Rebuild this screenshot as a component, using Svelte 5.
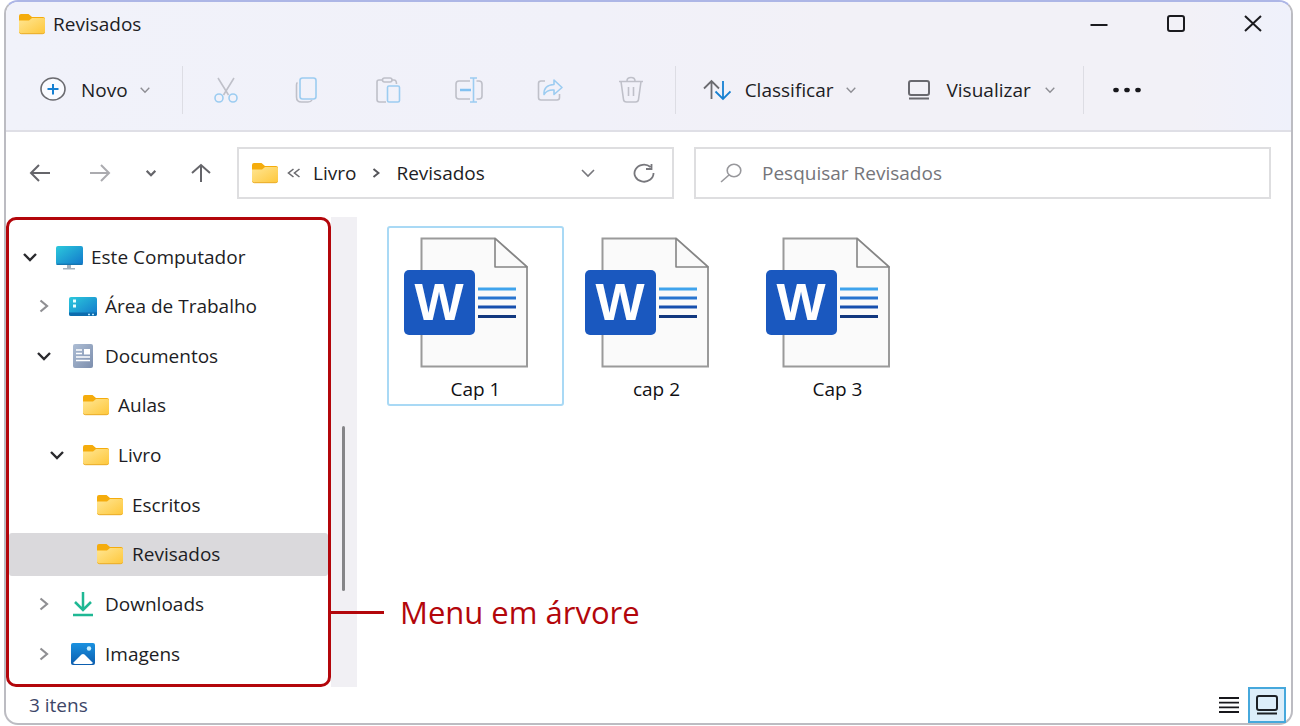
<script>
  const tree = [
    { label: 'Este Computador', level: 0, icon: 'monitor', state: 'open' },
    { label: 'Área de Trabalho', level: 1, icon: 'desktop', state: 'closed' },
    { label: 'Documentos', level: 1, icon: 'document', state: 'open' },
    { label: 'Aulas', level: 2, icon: 'folder' },
    { label: 'Livro', level: 2, icon: 'folder', state: 'open' },
    { label: 'Escritos', level: 3, icon: 'folder' },
    { label: 'Revisados', level: 3, icon: 'folder' },
    { label: 'Downloads', level: 1, icon: 'download', state: 'closed' },
    { label: 'Imagens', level: 1, icon: 'image', state: 'closed' }
  ];
  const files = ['Cap 1', 'cap 2', 'Cap 3'];
  const actions = [
    { id: 'cut', label: 'Recortar' },
    { id: 'copy', label: 'Copiar' },
    { id: 'paste', label: 'Colar' },
    { id: 'rename', label: 'Renomear' },
    { id: 'share', label: 'Compartilhar' },
    { id: 'trash', label: 'Excluir' }
  ];
  let current = $state('Revisados');
  let selected = $state('Cap 1');
  let query = $state('');
</script>

{#snippet folder()}
  <svg width="28" height="24" viewBox="0 0 28 24" aria-hidden="true">
    <path d="M1 4a2 2 0 0 1 2-2h7.500l3.500 3h11a2 2 0 0 1 2 2v4H1z" fill="#f5ac0c" />
    <path d="M1 8.500h10l3-2.500h11.500A1.500 1.500 0 0 1 27 7.500V20a2 2 0 0 1-2 2H3a2 2 0 0 1-2-2z" fill="url(#folderFill)" />
    <path d="M1.500 20.500Q2 21.700 3.500 21.700h21q1.500 0 2-1.200" fill="none" stroke="#e9ac2b" />
  </svg>
{/snippet}

{#snippet chevron(w, color, sw)}
  <svg width={w} height="12" viewBox="0 0 14 12" preserveAspectRatio="xMidYMid meet" aria-hidden="true">
    <path d="M1 3l6 6 6-6" fill="none" stroke={color} stroke-width={sw} />
  </svg>
{/snippet}

{#snippet screen(color)}
  <svg width="24" height="22" viewBox="0 0 24 22" aria-hidden="true" fill="none" stroke={color} stroke-width="2">
    <rect x="2" y="2" width="20" height="14" rx="2" /><path d="M2 19.500h20" />
  </svg>
{/snippet}

{#snippet treeIcon(name)}
  {#if name === 'folder'}
    {@render folder()}
  {:else if name === 'monitor'}
    <svg width="28" height="26" viewBox="0 0 28 26" aria-hidden="true">
      <path d="M12 20h4v4h4v1.500H8V24h4z" fill="#a3b1bd" />
      <rect x="1" y="2" width="27" height="19" rx="2" fill="url(#screenFill)" />
      <path d="M1.500 20.300h26" stroke="#1674ad" stroke-width="1.200" />
    </svg>
  {:else if name === 'desktop'}
    <svg width="28" height="22" viewBox="0 0 28 22" aria-hidden="true">
      <rect x="0" y="2" width="28" height="19" rx="2" fill="url(#screenFill)" />
      <path d="M0 17.500h28V19a2 2 0 0 1-2 2H2a2 2 0 0 1-2-2z" fill="#0c6cae" />
      <path d="M4 4.500h3v3H4zM4 9.500h3v3H4z" fill="#eaffff" />
      <path d="M19 19.500h2M23 19.500h2" stroke="#b8e8ff" stroke-width="1.500" />
    </svg>
  {:else if name === 'document'}
    <svg width="28" height="26" viewBox="0 0 28 26" aria-hidden="true">
      <rect x="4" y="1" width="20" height="24" rx="2" fill="url(#paperFill)" />
      <path d="M7 7h6M7 10.500h6M7 14h14M7 17.500h14" stroke="#fff" stroke-width="1.500" />
      <path d="M15 6h6v5.500h-6z" fill="#fff" />
    </svg>
  {:else if name === 'download'}
    <svg width="28" height="26" viewBox="0 0 28 26" aria-hidden="true" fill="none" stroke="#1fb894" stroke-width="2.500">
      <path d="M14 1v17M6 11l8 8 8-8M4 24h20" />
    </svg>
  {:else}
    <svg width="28" height="26" viewBox="0 0 28 26" aria-hidden="true">
      <rect x="2" y="2" width="24" height="22" rx="2" fill="url(#photoFill)" />
      <path d="M4 22l8.500-8.500q1.500-1.200 3 0L24 22q-1 1-2 1H6q-1 0-2-1z" fill="#fff" />
      <circle cx="20" cy="7.500" r="2.200" fill="#c8efff" />
    </svg>
  {/if}
{/snippet}

{#snippet actionIcon(id)}
  <svg width="28" height="28" viewBox="0 0 28 28" aria-hidden="true" fill="none" stroke="#bfc0c9" stroke-width="1.600">
    {#if id === 'cut'}
      <path d="M6 2l10.500 17M22 2L11.500 19" />
      <g stroke="#9cccf1"><circle cx="7" cy="22" r="4" /><circle cx="21" cy="22" r="4" /></g>
    {:else if id === 'copy'}
      <path d="M4.500 6.500C3.500 7 3.500 8 3.500 9v12q0 5 5 5h6.500q3 0 4-2" />
      <rect x="7" y="2" width="16" height="21" rx="2.500" stroke="#9cccf1" />
    {:else if id === 'paste'}
      <path d="M9 4H5Q3 4 3 6v17.500q0 2.500 2.500 2.500H12M18 4h2q2.500 0 2.500 4" />
      <rect x="8.500" y="2" width="9.500" height="4" rx="2" />
      <rect x="13.500" y="10" width="12" height="16" rx="1.500" stroke="#9cccf1" />
    {:else if id === 'rename'}
      <path d="M15 5H4Q1 5 1 8v12q0 3 3 3h11M21.500 5H24q3 0 3 3v12q0 3-3 3h-2.500" />
      <path d="M15 2h7M15 26h7M18.500 2v24" stroke="#9cccf1" />
      <path d="M5 14h11" stroke="#82c1f1" stroke-width="2.500" />
    {:else if id === 'share'}
      <path d="M9 5H5Q2.500 5 2.500 7.500v14Q2.500 24 5 24h16q2.500 0 2.500-2.500V18" />
      <path d="M18 4l8 7.500-8 7V14q-7-.5-10 4.500Q7.500 9 18 8.500z" stroke="#9cccf1" stroke-linejoin="round" />
    {:else}
      <path d="M2 5.500h24M10 5q0-3.500 4-3.500T18 5M4 5.500l2.500 18q.3 2.500 3 2.500h9q2.700 0 3-2.500L24 5.500M11.500 11v9M16.500 11v9" />
    {/if}
  </svg>
{/snippet}

<svg class="defs" width="0" height="0" aria-hidden="true">
  <defs>
    <linearGradient id="folderFill" x1="0" y1="0" x2="1" y2="1"><stop stop-color="#ffe694" /><stop offset="1" stop-color="#fec73a" /></linearGradient>
    <linearGradient id="screenFill" x1="0" y1="0" x2="1" y2="1"><stop stop-color="#2cc9dc" /><stop offset="1" stop-color="#1277cb" /></linearGradient>
    <linearGradient id="paperFill" x1="0" y1="0" x2="1" y2="1"><stop stop-color="#adbdd4" /><stop offset="1" stop-color="#7c8ead" /></linearGradient>
    <linearGradient id="photoFill" x1="0" y1="0" x2="0" y2="1"><stop stop-color="#1991e0" /><stop offset="1" stop-color="#0c5dae" /></linearGradient>
  </defs>
</svg>

<main class="window">
  <header>
    <div class="titlebar">
      <h1>{@render folder()}<span>{current}</span></h1>
      <div class="controls">
        <button aria-label="Minimizar"><svg width="20" height="20" viewBox="0 0 20 20"><path d="M1.500 11h17" stroke="#1b1b1f" stroke-width="2" /></svg></button>
        <button aria-label="Maximizar"><svg width="20" height="20" viewBox="0 0 20 20"><rect x="2" y="2" width="16" height="15" rx="2" fill="none" stroke="#1b1b1f" stroke-width="2" /></svg></button>
        <button aria-label="Fechar"><svg width="20" height="20" viewBox="0 0 20 20"><path d="M2 2l16 15M18 2L2 17" stroke="#1b1b1f" stroke-width="2" /></svg></button>
      </div>
    </div>
    <div class="toolbar">
      <button class="command new">
        <svg width="28" height="28" viewBox="0 0 28 28" aria-hidden="true"><ellipse cx="14" cy="13" rx="12" ry="11" fill="#fafbff" stroke="#6b6b70" stroke-width="1.600" /><path d="M8.500 13h11M14 8v10.500" stroke="#1680d2" stroke-width="2" /></svg>
        <span>Novo</span>{@render chevron(10, '#8e8e94', 2)}
      </button>
      <span class="sep"></span>
      {#each actions as a}
        <button class="action" aria-label={a.label}>{@render actionIcon(a.id)}</button>
      {/each}
      <span class="sep"></span>
      <button class="command sort">
        <svg width="28" height="22" viewBox="0 0 28 22" aria-hidden="true" fill="none" stroke-width="1.800"><path d="M8.500 20V2M1 9.500L8.500 2l7.500 7.500" stroke="#6b6b70" /><path d="M20 2v18M12.500 12.500l7.500 7.500 7.500-7.500" stroke="#1680d2" /></svg>
        <span>Classificar</span>{@render chevron(10, '#8e8e94', 2)}
      </button>
      <button class="command view">{@render screen('#69696f')}<span>Visualizar</span>{@render chevron(10, '#8e8e94', 2)}</button>
      <span class="sep"></span>
      <button class="action" aria-label="Mais opções"><svg width="30" height="10" viewBox="0 0 30 10"><g fill="#17171b"><ellipse cx="4" cy="5" rx="2.800" ry="2.300" /><ellipse cx="15" cy="5" rx="2.800" ry="2.300" /><ellipse cx="26" cy="5" rx="2.800" ry="2.300" /></g></svg></button>
    </div>
  </header>

  <div class="navigation">
    <nav aria-label="Histórico">
      <button aria-label="Voltar"><svg width="22" height="20" viewBox="0 0 22 20" fill="none" stroke="#65656a" stroke-width="2"><path d="M21 10H2M10 2l-8 8 8 8" /></svg></button>
      <button aria-label="Avançar"><svg width="22" height="20" viewBox="0 0 22 20" fill="none" stroke="#ababaf" stroke-width="2"><path d="M1 10h19M12 2l8 8-8 8" /></svg></button>
      <button class="recent" aria-label="Locais recentes">{@render chevron(10, '#65656a', 3)}</button>
      <button class="up" aria-label="Acima"><svg width="20" height="20" viewBox="0 0 20 20" fill="none" stroke="#65656a" stroke-width="2"><path d="M10 19V2M1 10l9-8 9 8" /></svg></button>
    </nav>
    <div class="address">
      {@render folder()}
      <svg class="more" width="14" height="12" viewBox="0 0 14 12" fill="none" stroke="#6a6a6e" stroke-width="1.600" aria-hidden="true"><path d="M6.500 2L1.500 6l5 4M12.500 2L7.500 6l5 4" /></svg>
      <a href="#livro">Livro</a>
      <svg width="8" height="12" viewBox="0 0 8 12" fill="none" stroke="#55555a" stroke-width="2" aria-hidden="true"><path d="M1.500 2l5 4-5 4" /></svg>
      <a class="here" href="#revisados">Revisados</a>
      <button aria-label="Locais anteriores">{@render chevron(14, '#77777c', 1.6)}</button>
      <button class="refresh" aria-label="Atualizar"><svg width="22" height="20" viewBox="0 0 22 20" fill="none" stroke="#77777c" stroke-width="1.800"><path d="M20.500 10A9.500 8.500 0 1 1 17.500 4M18.500 1v5H13" /></svg></button>
    </div>
    <label class="search">
      <svg width="22" height="20" viewBox="0 0 22 20" fill="none" stroke="#98989c" stroke-width="1.600" aria-hidden="true"><ellipse cx="14" cy="7.500" rx="6.800" ry="6.300" /><path d="M9 12l-8 7" /></svg>
      <input type="text" placeholder="Pesquisar Revisados" aria-label="Pesquisar Revisados" bind:value={query} />
    </label>
  </div>

  <div class="body">
    <aside>
      <ul>
        {#each tree as node}
          <li>
            <button class="node level{node.level}" class:current={node.label === current} onclick={() => (current = node.label)}>
              <span class="toggle">
                {#if node.state === 'open'}
                  {@render chevron(16, '#2a2a2e', 2.4)}
                {:else if node.state === 'closed'}
                  <svg width="10" height="14" viewBox="0 0 10 14" fill="none" stroke="#8f8f93" stroke-width="2.200" aria-hidden="true"><path d="M1.500 1.500l6.500 5.500-6.500 5.500" /></svg>
                {/if}
              </span>
              {@render treeIcon(node.icon)}
              <span>{node.label}</span>
            </button>
          </li>
        {/each}
      </ul>
      <p class="callout">Menu em árvore</p>
    </aside>
    <div class="track"><div class="thumb"></div></div>
    <section class="files">
      {#each files as name}
        <button class="file" class:selected={name === selected} onclick={() => (selected = name)}>
          <svg width="126" height="132" viewBox="0 0 126 132" aria-hidden="true">
            <path d="M18.500 1.500H92L124 30v99.500H18.500z" fill="#fafafa" stroke="#9a9a9a" stroke-width="2" />
            <path d="M92 1.500V30h32z" fill="#fafafa" stroke="#858585" stroke-width="1.600" stroke-linejoin="round" />
            <rect x="1" y="33" width="71" height="65" rx="5" fill="#1a58bf" />
            <path d="M75 52h38" stroke="#3fa3ec" stroke-width="3" /><path d="M75 61h38" stroke="#2874cf" stroke-width="3" /><path d="M75 70h38" stroke="#164fae" stroke-width="3" /><path d="M75 79.500h38" stroke="#12387f" stroke-width="3" />
            <text x="36" y="83" text-anchor="middle">W</text>
          </svg>
          <span>{name}</span>
        </button>
      {/each}
    </section>
  </div>

  <footer>
    <span class="count">3 itens</span>
    <button aria-label="Detalhes"><svg width="22" height="18" viewBox="0 0 22 18" stroke="#18181c" stroke-width="1.800"><path d="M1 2h20M1 6.700h20M1 11.400h20M1 16h20" /></svg></button>
    <button class="active" aria-label="Ícones grandes">{@render screen('#1c2025')}</button>
  </footer>
</main>

<style>
  :global(body) { margin: 0; background: #fff; }
  .defs { position: absolute; }
  * { box-sizing: border-box; }
  svg { flex: none; display: block; }
  button {
    display: flex; align-items: center; justify-content: center;
    padding: 0; border: 0; background: none; color: inherit; font: inherit; cursor: pointer;
  }
  .window {
    display: flex; flex-direction: column;
    min-height: calc(100vh - 1px);
    margin: 0 7px 1px 4px;
    border: 2px solid #bcbcc2; border-top-color: #adb6e6; border-radius: 14px;
    background: #fff; color: #1d1d24;
    font-family: "Open Sans", "Noto Sans", sans-serif; font-size: 19px; line-height: 26px;
  }
  header {
    border-bottom: 2px solid #dfdfe6; border-radius: 12px 12px 0 0;
    background: linear-gradient(90deg, #f1f2fa 0%, #f1f1f9 45%, #f2f1f7 65%, #f2f1f7 92%, #eff1fb 100%);
  }
  .titlebar { display: flex; align-items: center; justify-content: space-between; height: 44px; }
  h1 { display: flex; align-items: center; gap: 7px; margin: 0; padding-left: 12px; font: inherit; }
  .controls { display: flex; }
  .controls button { width: 77px; height: 42px; }
  .toolbar { display: flex; align-items: center; height: 84px; padding-top: 4px; }
  .command { height: 48px; gap: 14px; }
  .command :global(svg:last-child) { margin-left: -2px; }
  .new { padding: 0 29px 0 33px; }
  .sort { padding: 0 26px 0 24px; }
  .view { gap: 16px; padding: 0 25px; }
  .sep { width: 1px; height: 48px; margin: 0 3px; background: #dddde4; }
  .action { width: 81px; height: 48px; }

  .navigation { display: flex; align-items: center; height: 85px; padding: 0 20px 4px 4px; }
  nav { display: flex; margin-right: 8px; }
  nav button { width: 60px; height: 48px; }
  nav .recent { width: 42px; }
  nav .up { width: 57px; }
  .address, .search { display: flex; align-items: center; height: 52px; border: 2px solid #dedee0; }
  .address { flex: 3 1 437px; margin-right: 20px; padding: 0 10px 0 12px; }
  .address a { color: inherit; text-decoration: none; }
  .more { margin: 0 12px 0 8px; }
  .address a + svg { margin: 0 16px; }
  .here { margin-right: auto; }
  .address button { width: 56px; height: 48px; }
  .address .refresh { width: 36px; margin-left: 10px; }
  .search { flex: 4 1 577px; gap: 20px; padding: 0 24px; }
  input { flex: 1; min-width: 0; padding: 0; border: 0; outline: 0; background: none; color: #1d1d24; font: inherit; }
  input::placeholder { color: #75757a; opacity: 1; }

  .body { display: grid; flex: 1; grid-template-columns: 325px 26px 1fr; }
  aside { position: relative; display: flex; border: 3px solid #b3060b; border-radius: 10px; }
  ul { display: flex; flex: 1; flex-direction: column; justify-content: space-between; margin: 0; padding: 15px 0 9px; list-style: none; }
  .node { justify-content: flex-start; width: 100%; height: 43px; gap: 8px; border-radius: 3px; }
  .node.current { background: #dad9dc; }
  .level0 { padding-left: 11px; }
  .level1 { padding-left: 25px; }
  .level2 { padding-left: 38px; }
  .level3 { padding-left: 52px; }
  .toggle { display: flex; justify-content: center; width: 20px; margin-right: 7px; }
  .callout {
    position: absolute; left: 100%; bottom: 52px;
    display: flex; align-items: center; gap: 16px; margin: 0;
    color: #b3060b; font-size: 31px; line-height: 40px; white-space: nowrap;
  }
  .callout::before { width: 56px; height: 3px; background: currentColor; content: ""; }
  .track { display: flex; flex-direction: column; align-items: center; padding-right: 2px; background: #f1f0f4; }
  .thumb { width: 3px; height: 35%; margin-top: 209px; border-radius: 2px; background: #858588; }
  .files { display: flex; align-items: flex-start; gap: 4px; padding: 9px 30px; }
  .file { flex-direction: column; width: 177px; height: 180px; gap: 7px; padding-top: 7px; border: 2px solid transparent; border-radius: 3px; color: #101014; }
  .file svg { margin-right: 19px; }
  .file.selected { border-color: #a9d9f5; }
  .file text { fill: #fff; font-family: "Liberation Sans", Arial, sans-serif; font-size: 52px; font-weight: 700; }

  footer { display: flex; align-items: center; height: 36px; padding-right: 5px; color: #3d4668; }
  .count { margin-right: auto; padding-left: 23px; }
  footer button { width: 38px; height: 36px; }
  footer .active { border: 2px solid #46a8dc; background: #dceefa; }
</style>
